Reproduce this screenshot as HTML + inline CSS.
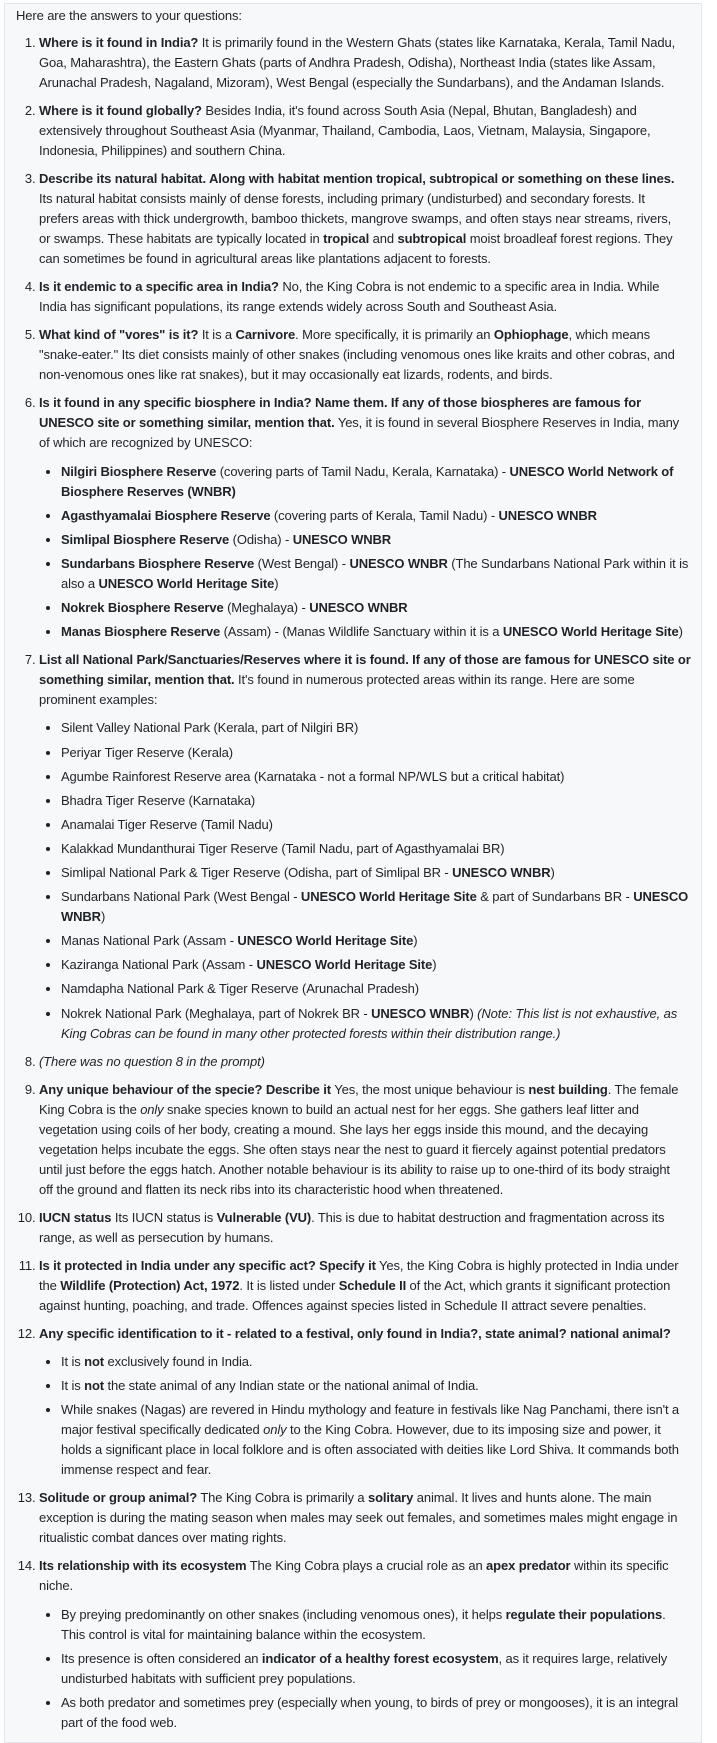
<!DOCTYPE html>
<html><head><meta charset="utf-8">
<style>
html,body{margin:0;padding:0;background:#fff;}
body{width:717px;height:1728px;overflow:hidden;font-family:"Liberation Sans",Arial,sans-serif;font-size:13px;letter-spacing:-0.12px;color:#1f2328;}
.box{position:absolute;left:4px;top:3px;width:698px;height:1740px;background:#f6f8fa;border:1px solid #e3e6ea;box-sizing:border-box;}
.in{padding:2px 0 0 11px;line-height:20px;white-space:nowrap;}
p{margin:0 0 7px 0;}
ol{margin:0;padding-left:23px;}
ol>li{margin-bottom:8px;}
ul{margin:8.5px 0 0 0;padding-left:22px;list-style:disc;}
ul>li{margin-bottom:4.1px;}
b{font-weight:bold;}
</style></head><body>
<div class="box"><div class="in">
<p>Here are the answers to your questions:</p>
<ol>
<li><b>Where is it found in India?</b> It is primarily found in the Western Ghats (states like Karnataka, Kerala, Tamil Nadu,<br>Goa, Maharashtra), the Eastern Ghats (parts of Andhra Pradesh, Odisha), Northeast India (states like Assam,<br>Arunachal Pradesh, Nagaland, Mizoram), West Bengal (especially the Sundarbans), and the Andaman Islands.</li>
<li><b>Where is it found globally?</b> Besides India, it's found across South Asia (Nepal, Bhutan, Bangladesh) and<br>extensively throughout Southeast Asia (Myanmar, Thailand, Cambodia, Laos, Vietnam, Malaysia, Singapore,<br>Indonesia, Philippines) and southern China.</li>
<li><b>Describe its natural habitat. Along with habitat mention tropical, subtropical or something on these lines.</b><br>Its natural habitat consists mainly of dense forests, including primary (undisturbed) and secondary forests. It<br>prefers areas with thick undergrowth, bamboo thickets, mangrove swamps, and often stays near streams, rivers,<br>or swamps. These habitats are typically located in <b>tropical</b> and <b>subtropical</b> moist broadleaf forest regions. They<br>can sometimes be found in agricultural areas like plantations adjacent to forests.</li>
<li><b>Is it endemic to a specific area in India?</b> No, the King Cobra is not endemic to a specific area in India. While<br>India has significant populations, its range extends widely across South and Southeast Asia.</li>
<li><b>What kind of "vores" is it?</b> It is a <b>Carnivore</b>. More specifically, it is primarily an <b>Ophiophage</b>, which means<br>"snake-eater." Its diet consists mainly of other snakes (including venomous ones like kraits and other cobras, and<br>non-venomous ones like rat snakes), but it may occasionally eat lizards, rodents, and birds.</li>
<li><b>Is it found in any specific biosphere in India? Name them. If any of those biospheres are famous for<br>UNESCO site or something similar, mention that.</b> Yes, it is found in several Biosphere Reserves in India, many<br>of which are recognized by UNESCO:
<ul>
<li><b>Nilgiri Biosphere Reserve</b> (covering parts of Tamil Nadu, Kerala, Karnataka) - <b>UNESCO World Network of<br>Biosphere Reserves (WNBR)</b></li>
<li><b>Agasthyamalai Biosphere Reserve</b> (covering parts of Kerala, Tamil Nadu) - <b>UNESCO WNBR</b></li>
<li><b>Simlipal Biosphere Reserve</b> (Odisha) - <b>UNESCO WNBR</b></li>
<li><b>Sundarbans Biosphere Reserve</b> (West Bengal) - <b>UNESCO WNBR</b> (The Sundarbans National Park within it is<br>also a <b>UNESCO World Heritage Site</b>)</li>
<li><b>Nokrek Biosphere Reserve</b> (Meghalaya) - <b>UNESCO WNBR</b></li>
<li><b>Manas Biosphere Reserve</b> (Assam) - (Manas Wildlife Sanctuary within it is a <b>UNESCO World Heritage Site</b>)</li>
</ul></li>
<li><b>List all National Park/Sanctuaries/Reserves where it is found. If any of those are famous for UNESCO site or<br>something similar, mention that.</b> It's found in numerous protected areas within its range. Here are some<br>prominent examples:
<ul>
<li>Silent Valley National Park (Kerala, part of Nilgiri BR)</li>
<li>Periyar Tiger Reserve (Kerala)</li>
<li>Agumbe Rainforest Reserve area (Karnataka - not a formal NP/WLS but a critical habitat)</li>
<li>Bhadra Tiger Reserve (Karnataka)</li>
<li>Anamalai Tiger Reserve (Tamil Nadu)</li>
<li>Kalakkad Mundanthurai Tiger Reserve (Tamil Nadu, part of Agasthyamalai BR)</li>
<li>Simlipal National Park &amp; Tiger Reserve (Odisha, part of Simlipal BR - <b>UNESCO WNBR</b>)</li>
<li>Sundarbans National Park (West Bengal - <b>UNESCO World Heritage Site</b> &amp; part of Sundarbans BR - <b>UNESCO<br>WNBR</b>)</li>
<li>Manas National Park (Assam - <b>UNESCO World Heritage Site</b>)</li>
<li>Kaziranga National Park (Assam - <b>UNESCO World Heritage Site</b>)</li>
<li>Namdapha National Park &amp; Tiger Reserve (Arunachal Pradesh)</li>
<li>Nokrek National Park (Meghalaya, part of Nokrek BR - <b>UNESCO WNBR</b>) <i>(Note: This list is not exhaustive, as<br>King Cobras can be found in many other protected forests within their distribution range.)</i></li>
</ul></li>
<li><i>(There was no question 8 in the prompt)</i></li>
<li><b>Any unique behaviour of the specie? Describe it</b> Yes, the most unique behaviour is <b>nest building</b>. The female<br>King Cobra is the <i>only</i> snake species known to build an actual nest for her eggs. She gathers leaf litter and<br>vegetation using coils of her body, creating a mound. She lays her eggs inside this mound, and the decaying<br>vegetation helps incubate the eggs. She often stays near the nest to guard it fiercely against potential predators<br>until just before the eggs hatch. Another notable behaviour is its ability to raise up to one-third of its body straight<br>off the ground and flatten its neck ribs into its characteristic hood when threatened.</li>
<li><b>IUCN status</b> Its IUCN status is <b>Vulnerable (VU)</b>. This is due to habitat destruction and fragmentation across its<br>range, as well as persecution by humans.</li>
<li><b>Is it protected in India under any specific act? Specify it</b> Yes, the King Cobra is highly protected in India under<br>the <b>Wildlife (Protection) Act, 1972</b>. It is listed under <b>Schedule II</b> of the Act, which grants it significant protection<br>against hunting, poaching, and trade. Offences against species listed in Schedule II attract severe penalties.</li>
<li><b>Any specific identification to it - related to a festival, only found in India?, state animal? national animal?</b>
<ul>
<li>It is <b>not</b> exclusively found in India.</li>
<li>It is <b>not</b> the state animal of any Indian state or the national animal of India.</li>
<li>While snakes (Nagas) are revered in Hindu mythology and feature in festivals like Nag Panchami, there isn't a<br>major festival specifically dedicated <i>only</i> to the King Cobra. However, due to its imposing size and power, it<br>holds a significant place in local folklore and is often associated with deities like Lord Shiva. It commands both<br>immense respect and fear.</li>
</ul></li>
<li><b>Solitude or group animal?</b> The King Cobra is primarily a <b>solitary</b> animal. It lives and hunts alone. The main<br>exception is during the mating season when males may seek out females, and sometimes males might engage in<br>ritualistic combat dances over mating rights.</li>
<li><b>Its relationship with its ecosystem</b> The King Cobra plays a crucial role as an <b>apex predator</b> within its specific<br>niche.
<ul>
<li>By preying predominantly on other snakes (including venomous ones), it helps <b>regulate their populations</b>.<br>This control is vital for maintaining balance within the ecosystem.</li>
<li>Its presence is often considered an <b>indicator of a healthy forest ecosystem</b>, as it requires large, relatively<br>undisturbed habitats with sufficient prey populations.</li>
<li>As both predator and sometimes prey (especially when young, to birds of prey or mongooses), it is an integral<br>part of the food web.</li>
</ul></li>
</ol>
</div></div>
</body></html>
